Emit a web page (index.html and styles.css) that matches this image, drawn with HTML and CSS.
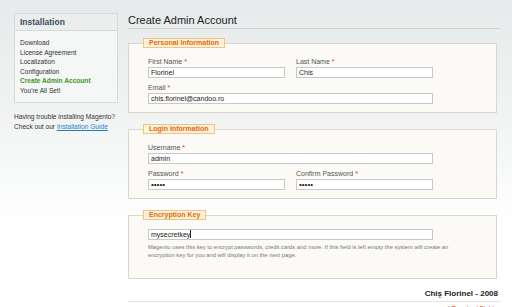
FILE: index.html
```html
<!DOCTYPE html>
<html lang="en">
<head>
    <meta charset="UTF-8">
    <title>Magento Installation - Create Admin Account</title>
    <link rel="stylesheet" href="styles.css">
</head>
<body>
    <div class="page">
        <div class="side">
            <div class="side-box">
                <h3>Installation</h3>
                <ul class="steps">
                    <li>Download</li>
                    <li>License Agreement</li>
                    <li>Localization</li>
                    <li>Configuration</li>
                    <li class="current">Create Admin Account</li>
                    <li>You're All Set!</li>
                </ul>
            </div>
            <p class="side-help">Having trouble installing Magento?<br>Check out our <a href="#">Installation Guide</a></p>
        </div>

        <div class="main">
            <h1 class="page-title">Create Admin Account</h1>

            <fieldset class="group">
                <legend>Personal Information</legend>
                <div class="fields">
                    <div class="row two">
                        <div class="field">
                            <label>First Name <em>*</em></label>
                            <input type="text" value="Florinel">
                        </div>
                        <div class="field">
                            <label>Last Name <em>*</em></label>
                            <input type="text" value="Chis">
                        </div>
                    </div>
                    <div class="row">
                        <div class="field">
                            <label>Email <em>*</em></label>
                            <input type="text" class="wide" value="chis.florinel@candoo.ro">
                        </div>
                    </div>
                </div>
            </fieldset>

            <fieldset class="group">
                <legend>Login Information</legend>
                <div class="fields">
                    <div class="row">
                        <div class="field">
                            <label>Username <em>*</em></label>
                            <input type="text" class="wide" value="admin">
                        </div>
                    </div>
                    <div class="row two">
                        <div class="field">
                            <label>Password <em>*</em></label>
                            <input type="password" value="12345">
                        </div>
                        <div class="field">
                            <label>Confirm Password <em>*</em></label>
                            <input type="password" value="12345">
                        </div>
                    </div>
                </div>
            </fieldset>

            <fieldset class="group">
                <legend>Encryption Key</legend>
                <div class="fields key">
                    <div class="key-input">mysecretkey<span class="caret"></span></div>
                    <p class="note">Magento uses this key to encrypt passwords, credit cards and more. If this field is left empty the system will create an encryption key for you and will display it on the next page.</p>
                </div>
            </fieldset>

            <div class="credit">Chiş Florinel - 2008</div>
            <div class="required">* Required Fields</div>
        </div>
    </div>
</body>
</html>
```

FILE: styles.css
```css
body {
    margin: 0;
    font-family: "Liberation Sans", Arial, sans-serif;
    color: #444;
    background: linear-gradient(#e7eaea 0, #f1f3f3 110px, #fff 230px);
    min-height: 307px;
    overflow: hidden;
}

.page {
    display: flex;
    gap: 10px;
    padding: 13px 0 0 14px;
}

.side {
    width: 104px;
    flex-shrink: 0;
}

.side-box {
    border: 1px solid #d6dada;
    background: #f5f6f6;
}

.side-box h3 {
    margin: 0;
    height: 16px;
    line-height: 17px;
    padding-left: 5px;
    font-size: 8.5px;
    font-weight: bold;
    color: #3a4d5e;
    background: #eceeee;
    border-bottom: 1px solid #d6dada;
}

.steps {
    list-style: none;
    margin: 0;
    padding: 7px 5px 7px;
    font-size: 6.6px;
    line-height: 9.5px;
    color: #333;
}

.steps .current {
    color: #3b9a1c;
    font-weight: bold;
}

.side-help {
    margin: 9px 0 0;
    font-size: 6.6px;
    line-height: 9.5px;
    color: #333;
}

.side-help a {
    color: #1f7fc9;
}

.main {
    width: 372px;
}

.page-title {
    margin: 1px 0 0;
    padding-bottom: 1px;
    font-size: 11px;
    line-height: 13px;
    font-weight: normal;
    color: #222;
    border-bottom: 1px solid #cfd3d2;
}

.group {
    margin: 9px 3px 0 0;
    padding: 0 14px 8px;
    border: 1px solid #d8d6ce;
    background: #fbfaf6;
    min-inline-size: 0;
}

.group + .group {
    margin-top: 11px;
}

.group legend {
    padding: 0 5px;
    height: 8px;
    line-height: 8px;
    font-size: 7px;
    font-weight: bold;
    color: #e2690b;
    background: #fdf2dc;
    border: 1px solid #f2c47c;
}

.fields {
    padding: 10px 0 0 5px;
}

.row + .row {
    margin-top: 6px;
}

.row.two {
    display: grid;
    grid-template-columns: 137px 137px;
    column-gap: 11px;
}

.field label {
    display: block;
    height: 8px;
    line-height: 8px;
    margin-bottom: 1px;
    font-size: 7px;
    color: #555;
}

.field label em {
    font-style: normal;
    color: #e0302a;
}

input,
.key-input {
    box-sizing: border-box;
    display: block;
    width: 137px;
    height: 11px;
    margin: 0;
    padding: 0 2px;
    border: 1px solid #c8c8c8;
    background: #fff;
    font-family: "Liberation Sans", Arial, sans-serif;
    font-size: 7px;
    line-height: 9px;
    color: #222;
}

input.wide,
.key-input {
    width: 285px;
}

input[type="password"] {
    font-size: 8px;
    letter-spacing: 0;
}

.fields.key {
    padding: 9px 0 11px 5px;
}

.caret {
    display: inline-block;
    width: 1px;
    height: 8px;
    vertical-align: -1px;
    background: #222;
}

.note {
    max-width: 308px;
    margin: 3px 0 0;
    font-size: 5.8px;
    line-height: 8px;
    color: #777;
}

.credit {
    margin-top: 10px;
    padding: 0 2px 2px 0;
    text-align: right;
    font-size: 8px;
    line-height: 10px;
    font-weight: bold;
    color: #222;
    border-bottom: 1px solid #e3e5e5;
}

.required {
    margin-top: 2px;
    padding-right: 3px;
    text-align: right;
    font-size: 6.5px;
    line-height: 9px;
    color: #e0302a;
}
```
